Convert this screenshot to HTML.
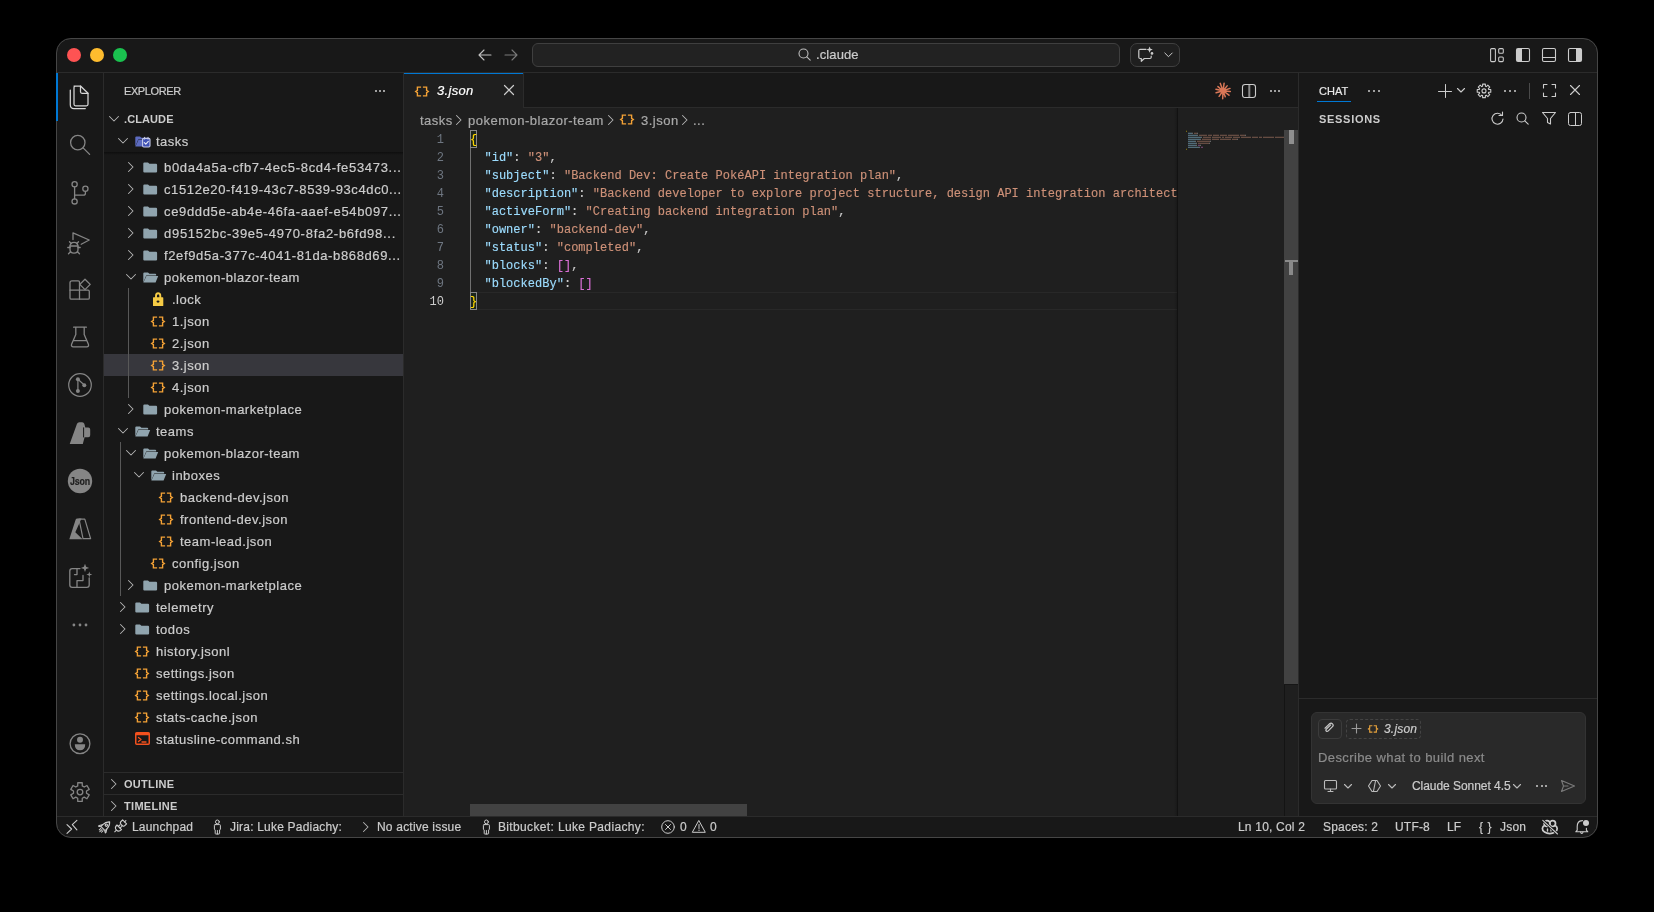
<!DOCTYPE html><html><head><meta charset="utf-8"><style>
*{box-sizing:border-box;margin:0;padding:0}
html,body{width:1654px;height:912px;background:#000;overflow:hidden;font-family:"Liberation Sans",sans-serif;color:#cccccc}
.a{position:absolute}
svg.i{position:absolute;overflow:visible;fill:none;stroke:#cccccc;stroke-width:1.1;stroke-linecap:round;stroke-linejoin:round}
.t{position:absolute;white-space:nowrap;font-size:13px;line-height:16px;-webkit-text-stroke:0.2px currentColor}
.code{position:absolute;font-family:"Liberation Mono",monospace;font-size:12px;line-height:18px;white-space:pre;color:#cccccc;letter-spacing:0.02px;-webkit-text-stroke:0.15px currentColor}
.k{color:#9cdcfe}.s{color:#ce9178}.b1{color:#ffd700}.b2{color:#da70d6}
.ln{position:absolute;font-family:"Liberation Mono",monospace;font-size:12px;line-height:18px;color:#6e7681;text-align:right;width:40px}
</style></head><body>
<div class="a" style="left:0;top:0;width:1654px;height:912px;clip-path:inset(38px 56px 74px 56px round 15px);will-change:transform">
<div class="a" style="left:56px;top:38px;width:1542px;height:800px;background:#181818"></div>
<div class="a" style="left:56px;top:72px;width:1542px;height:1px;background:#2b2b2b"></div>
<div class="a" style="left:67px;top:48px;width:14px;height:14px;border-radius:50%;background:#fe5353"></div>
<div class="a" style="left:90px;top:48px;width:14px;height:14px;border-radius:50%;background:#febc2e"></div>
<div class="a" style="left:113px;top:48px;width:14px;height:14px;border-radius:50%;background:#1ac24f"></div>
<svg class="i" style="left:478px;top:49px;stroke:#c0c0c0" width="14" height="12" viewBox="0 0 14 12"><path d="M1 6H13M6 1L1 6L6 11"/></svg>
<svg class="i" style="left:504px;top:49px;stroke:#7a7a7a" width="14" height="12" viewBox="0 0 14 12"><path d="M1 6H13M8 1L13 6L8 11"/></svg>
<div class="a" style="left:532px;top:43px;width:588px;height:24px;background:#222222;border:1px solid #3f3f3f;border-radius:6px"></div>
<svg class="i" style="left:798px;top:48px;stroke:#bdbdbd" width="13" height="13" viewBox="0 0 13 13"><circle cx="5.5" cy="5.5" r="4.5"/><path d="M8.8 8.8L12.2 12.2"/></svg>
<div class="t" style="left:816px;top:47.0px;font-size:13px;color:#cccccc;font-weight:normal;font-style:normal;line-height:16px;letter-spacing:0.1px;">.claude</div>
<div class="a" style="left:1130px;top:43px;width:50px;height:24px;background:#1f1f1f;border:1px solid #3f3f3f;border-radius:7px"></div>
<svg class="i" style="left:1138px;top:46px;stroke-width:1.2" width="17" height="17" viewBox="0 0 17 17"><path d="M8 3.3H2.3Q0.8 3.3 0.8 4.8V11.3Q0.8 12.5 2 12.5H3.3V15.3L6.3 12.5H12Q13.2 12.5 13.2 11.3V10.2"/><path d="M11.6 0.4L12.5 2.7L14.8 3.6L12.5 4.5L11.6 6.8L10.7 4.5L8.4 3.6L10.7 2.7Z" fill="#cccccc" stroke="none"/><circle cx="14" cy="7.4" r="1.3" fill="#cccccc" stroke="none"/></svg>
<svg class="i" style="left:1164px;top:52px;stroke-width:1" width="9" height="6" viewBox="0 0 9 6"><path d="M0.8 1L4.5 4.7L8.2 1"/></svg>
<svg class="i" style="left:1490px;top:48px;stroke-width:1.05" width="14" height="14" viewBox="0 0 14 14"><rect x="0.6" y="0.6" width="4.8" height="13" rx="1"/><rect x="8.7" y="0.6" width="4.6" height="4.7" rx="1"/><rect x="8.7" y="8.9" width="4.6" height="4.7" rx="1"/></svg>
<svg class="i" style="left:1516px;top:48px;" width="14" height="14" viewBox="0 0 14 14"><rect x="0.5" y="0.5" width="13" height="13" rx="1.5"/><rect x="1" y="1" width="5" height="12" fill="#cccccc" stroke="none"/></svg>
<svg class="i" style="left:1542px;top:48px;" width="14" height="14" viewBox="0 0 14 14"><rect x="0.5" y="0.5" width="13" height="13" rx="1.5"/><path d="M0.5 9.5H13.5"/></svg>
<svg class="i" style="left:1568px;top:48px;" width="14" height="14" viewBox="0 0 14 14"><rect x="0.5" y="0.5" width="13" height="13" rx="1.5"/><rect x="8" y="1" width="5" height="12" fill="#cccccc" stroke="none"/></svg>
<div class="a" style="left:103px;top:73px;width:1px;height:743px;background:#2b2b2b;"></div>
<svg class="i" style="left:57px;top:73px;stroke:none" width="46" height="743" viewBox="57 73 46 743"><g stroke="#d6d6d6" stroke-width="1.25"><path d="M74 86H80.5L88 93.3V104.3Q88 105.8 86.5 105.8H75.5Q74 105.8 74 104.3V87.5Q74 86 75.5 86Z"/><path d="M80.5 86V91.8Q80.5 93.3 82 93.3H88"/><path d="M70.3 90V104.8Q70.3 108.6 74 108.6H85.3"/></g><g stroke="#858585" stroke-width="1.3"><circle cx="77.8" cy="142.6" r="7.2"/><path d="M83.1 147.9L89.6 154.4"/></g><g stroke="#858585" stroke-width="1.3"><circle cx="74.6" cy="184.3" r="2.6"/><circle cx="85.4" cy="188.8" r="2.6"/><circle cx="74.6" cy="201.4" r="2.6"/><path d="M74.6 186.9V198.8M85.4 191.4V193.2Q85.4 195.2 83.4 195.2H74.6"/></g><g stroke="#858585" stroke-width="1.3"><path d="M73 239.5V232.8L89.2 240L81.2 244.3"/><path d="M70 246.5Q70 242.3 74 242.3Q78 242.3 78 246.5V249.5Q78 253.2 74 253.2Q70 253.2 70 249.5Z"/><path d="M71.2 243.5L69.5 241.8M76.8 243.5L78.5 241.8M70 247.5H67.8M78 247.5H80.2M70.6 251.8L68.5 253.8M77.4 251.8L79.5 253.8M70 246H78"/></g><g stroke="#858585" stroke-width="1.3"><path d="M72 280.8H78.2Q79.5 280.8 79.5 282.1V290.2H88Q89.3 290.2 89.3 291.5V297.9Q89.3 299.2 88 299.2H71.3Q70 299.2 70 297.9V282.8Q70 280.8 72 280.8Z"/><path d="M70 290.2H79.5V299.2"/><path d="M85 279.2L90.2 284.4L85 289.6L79.8 284.4Z" stroke-linejoin="round"/></g><g stroke="#858585" stroke-width="1.3"><path d="M73.6 327.2H86.4M75.8 327.2V334.6L71.6 344.2Q70.9 346.8 73.3 346.8H86.8Q89.1 346.8 88.4 344.2L84.2 334.6V327.2M73.4 340.7H86.6"/></g><g stroke="#858585" stroke-width="1.2"><circle cx="80" cy="385" r="11.3"/><path d="M77.9 379.3V391.1M77.9 379.3L84.3 385"/></g><g fill="#858585"><circle cx="77.9" cy="379.3" r="2"/><circle cx="84.3" cy="385.2" r="2"/><circle cx="77.9" cy="391.1" r="2"/></g><path fill="#858585" d="M69.7 444L77 423.8Q77.6 422.2 79.3 422.2H82.2Q83.8 422.2 84.3 423.8L85.3 427.6H88.3Q90.2 427.6 90.2 429.5V435.3Q90.2 437.2 88.3 437.2H84.6L82.8 444Z"/><path stroke="#181818" stroke-width="1" d="M83.6 427.8V437"/><circle fill="#858585" cx="80" cy="481" r="12.2"/><path fill="#858585" d="M69.3 539.2L75.7 519.6Q76.1 518.5 77.2 518.5H81.5L75.3 532.3L82.6 539.2Z"/><path stroke="#858585" stroke-width="1.2" stroke-linejoin="round" d="M79 519.1H84.8L90.6 538.6H83Z"/><g stroke="#858585" stroke-width="1.3"><path d="M80 568.6H72.2Q69.8 568.6 69.8 571V585Q69.8 587.4 72.2 587.4H86.8Q89.2 587.4 89.2 585V578"/><path d="M77 568.6V574.6H74.5M77 587.4V580.6H83V575.5"/></g><g fill="#858585"><path d="M85 563.8L86.1 566.8L89.1 567.9L86.1 569L85 572L83.9 569L80.9 567.9L83.9 566.8Z"/><path d="M89.3 571.5L90 573.8L92.3 574.5L90 575.2L89.3 577.5L88.6 575.2L86.3 574.5L88.6 573.8Z"/></g><g fill="#858585"><circle cx="73.9" cy="625" r="1.4"/><circle cx="80" cy="625" r="1.4"/><circle cx="86" cy="625" r="1.4"/></g><circle stroke="#858585" stroke-width="1.3" cx="80" cy="743.7" r="9.9"/><circle fill="#858585" cx="80" cy="739.7" r="3"/><path fill="#858585" d="M74.8 744.2H85.2Q85.2 750.2 80 750.2Q74.8 750.2 74.8 744.2Z"/><path stroke="#858585" stroke-width="1.3" stroke-linejoin="round" d="M77.72 785.91 L77.76 782.77 L82.24 782.77 L82.28 785.91 L84.22 787.03 L86.96 785.49 L89.20 789.37 L86.50 790.98 L86.50 793.22 L89.20 794.83 L86.96 798.71 L84.22 797.17 L82.28 798.29 L82.24 801.43 L77.76 801.43 L77.72 798.29 L75.78 797.17 L73.04 798.71 L70.80 794.83 L73.50 793.22 L73.50 790.98 L70.80 789.37 L73.04 785.49 L75.78 787.03Z"/><circle stroke="#858585" stroke-width="1.3" cx="80" cy="792.1" r="2.8"/></svg>
<div class="t" style="left:65px;top:473px;width:30px;text-align:center;font-size:11px;font-weight:bold;color:#1e1e1e;letter-spacing:-0.2px;transform:scaleX(0.8);transform-origin:center">Json</div>
<div class="t" style="left:124px;top:83.0px;font-size:11px;color:#cccccc;font-weight:normal;font-style:normal;line-height:16px;letter-spacing:-0.4px;">EXPLORER</div>
<div class="a" style="left:375px;top:90px;width:2.2px;height:2.2px;border-radius:50%;background:#cccccc"></div>
<div class="a" style="left:379px;top:90px;width:2.2px;height:2.2px;border-radius:50%;background:#cccccc"></div>
<div class="a" style="left:383px;top:90px;width:2.2px;height:2.2px;border-radius:50%;background:#cccccc"></div>
<svg class="i" style="left:109px;top:116px;stroke:#b4b4b4;stroke-width:1.05" width="10" height="6" viewBox="0 0 10 6"><path d="M0.5 0.5L5 5L9.5 0.5"/></svg>
<div class="t" style="left:124px;top:111.0px;font-size:11px;color:#cccccc;font-weight:bold;font-style:normal;line-height:16px;letter-spacing:0.1px;-webkit-text-stroke:0;">.CLAUDE</div>
<svg class="i" style="left:118px;top:138px;stroke:#b4b4b4;stroke-width:1.05" width="10" height="6" viewBox="0 0 10 6"><path d="M0.5 0.5L5 5L9.5 0.5"/></svg>
<svg class="i" style="left:135px;top:136px;" width="16" height="12" viewBox="0 0 16 12"><path d="M0.3 1.6Q0.3 0.5 1.4 0.5H5L6.4 1.8H12.2Q13.2 1.8 13.2 2.8V3.6H3.2L0.3 10.5Z" fill="#5c6bc0" stroke="none"/><path d="M3.4 4.1H15.2L12.6 10.6H0.4Z" fill="#5c6bc0" stroke="none"/><rect x="7.6" y="2.4" width="7.4" height="8.6" rx="1.2" fill="#3f51b5" stroke="#c5cae9" stroke-width="1.1"/><path d="M9.3 6.6L10.8 8.1L13.3 5.3" stroke="#e8eaf6" stroke-width="1.1"/><path d="M9.6 1.3V3.2M13 1.3V3.2" stroke="#c5cae9" stroke-width="1"/></svg>
<div class="t" style="left:156px;top:134.0px;font-size:13px;color:#cccccc;font-weight:normal;font-style:normal;line-height:16px;letter-spacing:0.5px;">tasks</div>
<div class="a" style="left:104px;top:152px;width:299px;height:3px;background:linear-gradient(#0e0e0e,rgba(24,24,24,0))"></div>
<div class="a" style="left:104px;top:354px;width:299px;height:22px;background:#37373d;"></div>
<div class="a" style="left:128px;top:288px;width:1px;height:110px;background:#585858;"></div>
<div class="a" style="left:120px;top:442px;width:1px;height:154px;background:#585858;"></div>
<svg class="i" style="left:128px;top:162px;stroke:#b4b4b4;stroke-width:1.05" width="6" height="10" viewBox="0 0 6 10"><path d="M0.5 0.5L5 5L0.5 9.5"/></svg>
<svg class="i" style="left:143px;top:161.5px;" width="15" height="11" viewBox="0 0 15 11"><path d="M0.3 1.6Q0.3 0.5 1.4 0.5H5L6.4 1.8H13Q14.1 1.8 14.1 2.9V9.4Q14.1 10.5 13 10.5H1.4Q0.3 10.5 0.3 9.4Z" fill="#90a4ae" stroke="none"/></svg>
<div class="t" style="left:164px;top:160.0px;font-size:13px;color:#cccccc;font-weight:normal;font-style:normal;line-height:16px;letter-spacing:0.693px;">b0da4a5a-cfb7-4ec5-8cd4-fe53473...</div>
<svg class="i" style="left:128px;top:184px;stroke:#b4b4b4;stroke-width:1.05" width="6" height="10" viewBox="0 0 6 10"><path d="M0.5 0.5L5 5L0.5 9.5"/></svg>
<svg class="i" style="left:143px;top:183.5px;" width="15" height="11" viewBox="0 0 15 11"><path d="M0.3 1.6Q0.3 0.5 1.4 0.5H5L6.4 1.8H13Q14.1 1.8 14.1 2.9V9.4Q14.1 10.5 13 10.5H1.4Q0.3 10.5 0.3 9.4Z" fill="#90a4ae" stroke="none"/></svg>
<div class="t" style="left:164px;top:182.0px;font-size:13px;color:#cccccc;font-weight:normal;font-style:normal;line-height:16px;letter-spacing:0.617px;">c1512e20-f419-43c7-8539-93c4dc0...</div>
<svg class="i" style="left:128px;top:206px;stroke:#b4b4b4;stroke-width:1.05" width="6" height="10" viewBox="0 0 6 10"><path d="M0.5 0.5L5 5L0.5 9.5"/></svg>
<svg class="i" style="left:143px;top:205.5px;" width="15" height="11" viewBox="0 0 15 11"><path d="M0.3 1.6Q0.3 0.5 1.4 0.5H5L6.4 1.8H13Q14.1 1.8 14.1 2.9V9.4Q14.1 10.5 13 10.5H1.4Q0.3 10.5 0.3 9.4Z" fill="#90a4ae" stroke="none"/></svg>
<div class="t" style="left:164px;top:204.0px;font-size:13px;color:#cccccc;font-weight:normal;font-style:normal;line-height:16px;letter-spacing:0.648px;">ce9ddd5e-ab4e-46fa-aaef-e54b097...</div>
<svg class="i" style="left:128px;top:228px;stroke:#b4b4b4;stroke-width:1.05" width="6" height="10" viewBox="0 0 6 10"><path d="M0.5 0.5L5 5L0.5 9.5"/></svg>
<svg class="i" style="left:143px;top:227.5px;" width="15" height="11" viewBox="0 0 15 11"><path d="M0.3 1.6Q0.3 0.5 1.4 0.5H5L6.4 1.8H13Q14.1 1.8 14.1 2.9V9.4Q14.1 10.5 13 10.5H1.4Q0.3 10.5 0.3 9.4Z" fill="#90a4ae" stroke="none"/></svg>
<div class="t" style="left:164px;top:226.0px;font-size:13px;color:#cccccc;font-weight:normal;font-style:normal;line-height:16px;letter-spacing:0.723px;">d95152bc-39e5-4970-8fa2-b6fd98...</div>
<svg class="i" style="left:128px;top:250px;stroke:#b4b4b4;stroke-width:1.05" width="6" height="10" viewBox="0 0 6 10"><path d="M0.5 0.5L5 5L0.5 9.5"/></svg>
<svg class="i" style="left:143px;top:249.5px;" width="15" height="11" viewBox="0 0 15 11"><path d="M0.3 1.6Q0.3 0.5 1.4 0.5H5L6.4 1.8H13Q14.1 1.8 14.1 2.9V9.4Q14.1 10.5 13 10.5H1.4Q0.3 10.5 0.3 9.4Z" fill="#90a4ae" stroke="none"/></svg>
<div class="t" style="left:164px;top:248.0px;font-size:13px;color:#cccccc;font-weight:normal;font-style:normal;line-height:16px;letter-spacing:0.63px;">f2ef9d5a-377c-4041-81da-b868d69...</div>
<svg class="i" style="left:126px;top:274px;stroke:#b4b4b4;stroke-width:1.05" width="10" height="6" viewBox="0 0 10 6"><path d="M0.5 0.5L5 5L9.5 0.5"/></svg>
<svg class="i" style="left:143px;top:271.5px;" width="15" height="11" viewBox="0 0 15 11"><path d="M0.3 1.6Q0.3 0.5 1.4 0.5H5L6.4 1.8H12.2Q13.2 1.8 13.2 2.8V3.6H3.2L0.3 10.5Z" fill="#90a4ae" stroke="none"/><path d="M3.4 4.1H15.2L12.6 10.6H0.4Z" fill="#90a4ae" stroke="none"/></svg>
<div class="t" style="left:164px;top:270.0px;font-size:13px;color:#cccccc;font-weight:normal;font-style:normal;line-height:16px;letter-spacing:0.5px;">pokemon-blazor-team</div>
<svg class="i" style="left:152.9px;top:291.5px;" width="11" height="15" viewBox="0 0 11 15"><path d="M3 6V3.9Q3 1.2 5.15 1.2Q7.3 1.2 7.3 3.9V6" stroke="#f5cb45" stroke-width="1.9"/><rect x="0" y="5.3" width="10.3" height="8.7" rx="0.6" fill="#f5cb45" stroke="none"/><ellipse cx="5" cy="9.6" rx="1.5" ry="1.1" fill="#181818" stroke="none"/></svg>
<div class="t" style="left:172px;top:292.0px;font-size:13px;color:#cccccc;font-weight:normal;font-style:normal;line-height:16px;letter-spacing:0.5px;">.lock</div>
<svg class="i" style="left:151px;top:315.5px;stroke:#f4a236;stroke-width:1.4;stroke-linecap:butt;stroke-linejoin:miter" width="14.0" height="11.0" viewBox="0 0 14 11"><path d="M6.1 1.1H2.4V4.3L0.7 5.5L2.4 6.7V9.9H6.1M7.9 1.1H11.6V4.3L13.3 5.5L11.6 6.7V9.9H7.9"/></svg>
<div class="t" style="left:172px;top:314.0px;font-size:13px;color:#cccccc;font-weight:normal;font-style:normal;line-height:16px;letter-spacing:0.5px;">1.json</div>
<svg class="i" style="left:151px;top:337.5px;stroke:#f4a236;stroke-width:1.4;stroke-linecap:butt;stroke-linejoin:miter" width="14.0" height="11.0" viewBox="0 0 14 11"><path d="M6.1 1.1H2.4V4.3L0.7 5.5L2.4 6.7V9.9H6.1M7.9 1.1H11.6V4.3L13.3 5.5L11.6 6.7V9.9H7.9"/></svg>
<div class="t" style="left:172px;top:336.0px;font-size:13px;color:#cccccc;font-weight:normal;font-style:normal;line-height:16px;letter-spacing:0.5px;">2.json</div>
<svg class="i" style="left:151px;top:359.5px;stroke:#f4a236;stroke-width:1.4;stroke-linecap:butt;stroke-linejoin:miter" width="14.0" height="11.0" viewBox="0 0 14 11"><path d="M6.1 1.1H2.4V4.3L0.7 5.5L2.4 6.7V9.9H6.1M7.9 1.1H11.6V4.3L13.3 5.5L11.6 6.7V9.9H7.9"/></svg>
<div class="t" style="left:172px;top:358.0px;font-size:13px;color:#cccccc;font-weight:normal;font-style:normal;line-height:16px;letter-spacing:0.5px;">3.json</div>
<svg class="i" style="left:151px;top:381.5px;stroke:#f4a236;stroke-width:1.4;stroke-linecap:butt;stroke-linejoin:miter" width="14.0" height="11.0" viewBox="0 0 14 11"><path d="M6.1 1.1H2.4V4.3L0.7 5.5L2.4 6.7V9.9H6.1M7.9 1.1H11.6V4.3L13.3 5.5L11.6 6.7V9.9H7.9"/></svg>
<div class="t" style="left:172px;top:380.0px;font-size:13px;color:#cccccc;font-weight:normal;font-style:normal;line-height:16px;letter-spacing:0.5px;">4.json</div>
<svg class="i" style="left:128px;top:404px;stroke:#b4b4b4;stroke-width:1.05" width="6" height="10" viewBox="0 0 6 10"><path d="M0.5 0.5L5 5L0.5 9.5"/></svg>
<svg class="i" style="left:143px;top:403.5px;" width="15" height="11" viewBox="0 0 15 11"><path d="M0.3 1.6Q0.3 0.5 1.4 0.5H5L6.4 1.8H13Q14.1 1.8 14.1 2.9V9.4Q14.1 10.5 13 10.5H1.4Q0.3 10.5 0.3 9.4Z" fill="#90a4ae" stroke="none"/></svg>
<div class="t" style="left:164px;top:402.0px;font-size:13px;color:#cccccc;font-weight:normal;font-style:normal;line-height:16px;letter-spacing:0.5px;">pokemon-marketplace</div>
<svg class="i" style="left:118px;top:428px;stroke:#b4b4b4;stroke-width:1.05" width="10" height="6" viewBox="0 0 10 6"><path d="M0.5 0.5L5 5L9.5 0.5"/></svg>
<svg class="i" style="left:135px;top:425.5px;" width="15" height="11" viewBox="0 0 15 11"><path d="M0.3 1.6Q0.3 0.5 1.4 0.5H5L6.4 1.8H12.2Q13.2 1.8 13.2 2.8V3.6H3.2L0.3 10.5Z" fill="#90a4ae" stroke="none"/><path d="M3.4 4.1H15.2L12.6 10.6H0.4Z" fill="#90a4ae" stroke="none"/></svg>
<div class="t" style="left:156px;top:424.0px;font-size:13px;color:#cccccc;font-weight:normal;font-style:normal;line-height:16px;letter-spacing:0.5px;">teams</div>
<svg class="i" style="left:126px;top:450px;stroke:#b4b4b4;stroke-width:1.05" width="10" height="6" viewBox="0 0 10 6"><path d="M0.5 0.5L5 5L9.5 0.5"/></svg>
<svg class="i" style="left:143px;top:447.5px;" width="15" height="11" viewBox="0 0 15 11"><path d="M0.3 1.6Q0.3 0.5 1.4 0.5H5L6.4 1.8H12.2Q13.2 1.8 13.2 2.8V3.6H3.2L0.3 10.5Z" fill="#90a4ae" stroke="none"/><path d="M3.4 4.1H15.2L12.6 10.6H0.4Z" fill="#90a4ae" stroke="none"/></svg>
<div class="t" style="left:164px;top:446.0px;font-size:13px;color:#cccccc;font-weight:normal;font-style:normal;line-height:16px;letter-spacing:0.5px;">pokemon-blazor-team</div>
<svg class="i" style="left:134px;top:472px;stroke:#b4b4b4;stroke-width:1.05" width="10" height="6" viewBox="0 0 10 6"><path d="M0.5 0.5L5 5L9.5 0.5"/></svg>
<svg class="i" style="left:151px;top:469.5px;" width="15" height="11" viewBox="0 0 15 11"><path d="M0.3 1.6Q0.3 0.5 1.4 0.5H5L6.4 1.8H12.2Q13.2 1.8 13.2 2.8V3.6H3.2L0.3 10.5Z" fill="#90a4ae" stroke="none"/><path d="M3.4 4.1H15.2L12.6 10.6H0.4Z" fill="#90a4ae" stroke="none"/></svg>
<div class="t" style="left:172px;top:468.0px;font-size:13px;color:#cccccc;font-weight:normal;font-style:normal;line-height:16px;letter-spacing:0.5px;">inboxes</div>
<svg class="i" style="left:159px;top:491.5px;stroke:#f4a236;stroke-width:1.4;stroke-linecap:butt;stroke-linejoin:miter" width="14.0" height="11.0" viewBox="0 0 14 11"><path d="M6.1 1.1H2.4V4.3L0.7 5.5L2.4 6.7V9.9H6.1M7.9 1.1H11.6V4.3L13.3 5.5L11.6 6.7V9.9H7.9"/></svg>
<div class="t" style="left:180px;top:490.0px;font-size:13px;color:#cccccc;font-weight:normal;font-style:normal;line-height:16px;letter-spacing:0.5px;">backend-dev.json</div>
<svg class="i" style="left:159px;top:513.5px;stroke:#f4a236;stroke-width:1.4;stroke-linecap:butt;stroke-linejoin:miter" width="14.0" height="11.0" viewBox="0 0 14 11"><path d="M6.1 1.1H2.4V4.3L0.7 5.5L2.4 6.7V9.9H6.1M7.9 1.1H11.6V4.3L13.3 5.5L11.6 6.7V9.9H7.9"/></svg>
<div class="t" style="left:180px;top:512.0px;font-size:13px;color:#cccccc;font-weight:normal;font-style:normal;line-height:16px;letter-spacing:0.5px;">frontend-dev.json</div>
<svg class="i" style="left:159px;top:535.5px;stroke:#f4a236;stroke-width:1.4;stroke-linecap:butt;stroke-linejoin:miter" width="14.0" height="11.0" viewBox="0 0 14 11"><path d="M6.1 1.1H2.4V4.3L0.7 5.5L2.4 6.7V9.9H6.1M7.9 1.1H11.6V4.3L13.3 5.5L11.6 6.7V9.9H7.9"/></svg>
<div class="t" style="left:180px;top:534.0px;font-size:13px;color:#cccccc;font-weight:normal;font-style:normal;line-height:16px;letter-spacing:0.5px;">team-lead.json</div>
<svg class="i" style="left:151px;top:557.5px;stroke:#f4a236;stroke-width:1.4;stroke-linecap:butt;stroke-linejoin:miter" width="14.0" height="11.0" viewBox="0 0 14 11"><path d="M6.1 1.1H2.4V4.3L0.7 5.5L2.4 6.7V9.9H6.1M7.9 1.1H11.6V4.3L13.3 5.5L11.6 6.7V9.9H7.9"/></svg>
<div class="t" style="left:172px;top:556.0px;font-size:13px;color:#cccccc;font-weight:normal;font-style:normal;line-height:16px;letter-spacing:0.5px;">config.json</div>
<svg class="i" style="left:128px;top:580px;stroke:#b4b4b4;stroke-width:1.05" width="6" height="10" viewBox="0 0 6 10"><path d="M0.5 0.5L5 5L0.5 9.5"/></svg>
<svg class="i" style="left:143px;top:579.5px;" width="15" height="11" viewBox="0 0 15 11"><path d="M0.3 1.6Q0.3 0.5 1.4 0.5H5L6.4 1.8H13Q14.1 1.8 14.1 2.9V9.4Q14.1 10.5 13 10.5H1.4Q0.3 10.5 0.3 9.4Z" fill="#90a4ae" stroke="none"/></svg>
<div class="t" style="left:164px;top:578.0px;font-size:13px;color:#cccccc;font-weight:normal;font-style:normal;line-height:16px;letter-spacing:0.5px;">pokemon-marketplace</div>
<svg class="i" style="left:120px;top:602px;stroke:#b4b4b4;stroke-width:1.05" width="6" height="10" viewBox="0 0 6 10"><path d="M0.5 0.5L5 5L0.5 9.5"/></svg>
<svg class="i" style="left:135px;top:601.5px;" width="15" height="11" viewBox="0 0 15 11"><path d="M0.3 1.6Q0.3 0.5 1.4 0.5H5L6.4 1.8H13Q14.1 1.8 14.1 2.9V9.4Q14.1 10.5 13 10.5H1.4Q0.3 10.5 0.3 9.4Z" fill="#90a4ae" stroke="none"/></svg>
<div class="t" style="left:156px;top:600.0px;font-size:13px;color:#cccccc;font-weight:normal;font-style:normal;line-height:16px;letter-spacing:0.5px;">telemetry</div>
<svg class="i" style="left:120px;top:624px;stroke:#b4b4b4;stroke-width:1.05" width="6" height="10" viewBox="0 0 6 10"><path d="M0.5 0.5L5 5L0.5 9.5"/></svg>
<svg class="i" style="left:135px;top:623.5px;" width="15" height="11" viewBox="0 0 15 11"><path d="M0.3 1.6Q0.3 0.5 1.4 0.5H5L6.4 1.8H13Q14.1 1.8 14.1 2.9V9.4Q14.1 10.5 13 10.5H1.4Q0.3 10.5 0.3 9.4Z" fill="#90a4ae" stroke="none"/></svg>
<div class="t" style="left:156px;top:622.0px;font-size:13px;color:#cccccc;font-weight:normal;font-style:normal;line-height:16px;letter-spacing:0.5px;">todos</div>
<svg class="i" style="left:135px;top:645.5px;stroke:#f4a236;stroke-width:1.4;stroke-linecap:butt;stroke-linejoin:miter" width="14.0" height="11.0" viewBox="0 0 14 11"><path d="M6.1 1.1H2.4V4.3L0.7 5.5L2.4 6.7V9.9H6.1M7.9 1.1H11.6V4.3L13.3 5.5L11.6 6.7V9.9H7.9"/></svg>
<div class="t" style="left:156px;top:644.0px;font-size:13px;color:#cccccc;font-weight:normal;font-style:normal;line-height:16px;letter-spacing:0.5px;">history.jsonl</div>
<svg class="i" style="left:135px;top:667.5px;stroke:#f4a236;stroke-width:1.4;stroke-linecap:butt;stroke-linejoin:miter" width="14.0" height="11.0" viewBox="0 0 14 11"><path d="M6.1 1.1H2.4V4.3L0.7 5.5L2.4 6.7V9.9H6.1M7.9 1.1H11.6V4.3L13.3 5.5L11.6 6.7V9.9H7.9"/></svg>
<div class="t" style="left:156px;top:666.0px;font-size:13px;color:#cccccc;font-weight:normal;font-style:normal;line-height:16px;letter-spacing:0.5px;">settings.json</div>
<svg class="i" style="left:135px;top:689.5px;stroke:#f4a236;stroke-width:1.4;stroke-linecap:butt;stroke-linejoin:miter" width="14.0" height="11.0" viewBox="0 0 14 11"><path d="M6.1 1.1H2.4V4.3L0.7 5.5L2.4 6.7V9.9H6.1M7.9 1.1H11.6V4.3L13.3 5.5L11.6 6.7V9.9H7.9"/></svg>
<div class="t" style="left:156px;top:688.0px;font-size:13px;color:#cccccc;font-weight:normal;font-style:normal;line-height:16px;letter-spacing:0.5px;">settings.local.json</div>
<svg class="i" style="left:135px;top:711.5px;stroke:#f4a236;stroke-width:1.4;stroke-linecap:butt;stroke-linejoin:miter" width="14.0" height="11.0" viewBox="0 0 14 11"><path d="M6.1 1.1H2.4V4.3L0.7 5.5L2.4 6.7V9.9H6.1M7.9 1.1H11.6V4.3L13.3 5.5L11.6 6.7V9.9H7.9"/></svg>
<div class="t" style="left:156px;top:710.0px;font-size:13px;color:#cccccc;font-weight:normal;font-style:normal;line-height:16px;letter-spacing:0.5px;">stats-cache.json</div>
<svg class="i" style="left:135px;top:732px;" width="15" height="13" viewBox="0 0 15 13"><rect x="0.75" y="0.75" width="13.5" height="11.5" rx="1" stroke="#f4511e" stroke-width="1.5"/><rect x="0.75" y="0.75" width="13.5" height="2.5" fill="#f4511e" stroke="none"/><path d="M3.5 5.5L6 7.5L3.5 9.5M7 10H11" stroke="#f4511e" stroke-width="1.3"/></svg>
<div class="t" style="left:156px;top:732.0px;font-size:13px;color:#cccccc;font-weight:normal;font-style:normal;line-height:16px;letter-spacing:0.5px;">statusline-command.sh</div>
<div class="a" style="left:104px;top:772px;width:299px;height:1px;background:#2b2b2b;"></div>
<div class="a" style="left:104px;top:794px;width:299px;height:1px;background:#2b2b2b;"></div>
<svg class="i" style="left:111px;top:779px;stroke:#b4b4b4;stroke-width:1.05" width="6" height="10" viewBox="0 0 6 10"><path d="M0.5 0.5L5 5L0.5 9.5"/></svg>
<div class="t" style="left:124px;top:776.0px;font-size:11px;color:#cccccc;font-weight:bold;font-style:normal;line-height:16px;letter-spacing:0.3px;-webkit-text-stroke:0;">OUTLINE</div>
<svg class="i" style="left:111px;top:801px;stroke:#b4b4b4;stroke-width:1.05" width="6" height="10" viewBox="0 0 6 10"><path d="M0.5 0.5L5 5L0.5 9.5"/></svg>
<div class="t" style="left:124px;top:798.0px;font-size:11px;color:#cccccc;font-weight:bold;font-style:normal;line-height:16px;letter-spacing:0.3px;-webkit-text-stroke:0;">TIMELINE</div>
<div class="a" style="left:403px;top:73px;width:1px;height:743px;background:#2b2b2b;"></div>
<div class="a" style="left:404px;top:108px;width:894px;height:708px;background:#1f1f1f;"></div>
<div class="a" style="left:523px;top:107px;width:775px;height:1px;background:#2b2b2b;"></div>
<div class="a" style="left:404px;top:73px;width:119px;height:35px;background:#1f1f1f;"></div>
<div class="a" style="left:404px;top:73px;width:119px;height:1px;background:#0078d4;"></div>
<div class="a" style="left:523px;top:73px;width:1px;height:34px;background:#2b2b2b;"></div>
<svg class="i" style="left:415px;top:85.5px;stroke:#f4a236;stroke-width:1.4;stroke-linecap:butt;stroke-linejoin:miter" width="14.0" height="11.0" viewBox="0 0 14 11"><path d="M6.1 1.1H2.4V4.3L0.7 5.5L2.4 6.7V9.9H6.1M7.9 1.1H11.6V4.3L13.3 5.5L11.6 6.7V9.9H7.9"/></svg>
<div class="t" style="left:437px;top:82.5px;font-size:13px;color:#ffffff;font-weight:normal;font-style:italic;line-height:16px;letter-spacing:0.3px;">3.json</div>
<svg class="i" style="left:504px;top:85px;stroke:#cccccc;stroke-width:1.2" width="10" height="10" viewBox="0 0 10 10"><path d="M0.5 0.5L9.5 9.5M9.5 0.5L0.5 9.5"/></svg>
<svg class="i" style="left:1213px;top:81px;stroke:none" width="20" height="20" viewBox="1213 81 20 20"><path stroke="#d97757" stroke-width="1.5" stroke-linecap="round" d="M1224.49 90.93L1230.31 91.42M1224.21 91.69L1228.99 95.22M1223.53 92.21L1225.25 96.82M1222.94 92.30L1222.70 98.69M1222.14 92.03L1219.12 96.32M1221.56 91.21L1216.09 92.79M1221.53 90.49L1215.95 89.30M1221.85 89.84L1217.93 86.60M1222.48 89.39L1220.23 83.35M1223.22 89.32L1224.11 83.17M1223.97 89.65L1227.13 85.88M1224.42 90.31L1230.02 88.40"/><circle cx="1223" cy="90.8" r="2.8" fill="#d97757"/></svg>
<svg class="i" style="left:1242px;top:84px;stroke-width:1.1" width="14" height="14" viewBox="0 0 14 14"><rect x="0.5" y="0.5" width="13" height="13" rx="2.5"/><rect x="6.3" y="1" width="2" height="12" fill="#8a8a8a" stroke="none"/></svg>
<div class="a" style="left:1270px;top:90px;width:2.2px;height:2.2px;border-radius:50%;background:#cccccc"></div>
<div class="a" style="left:1274px;top:90px;width:2.2px;height:2.2px;border-radius:50%;background:#cccccc"></div>
<div class="a" style="left:1278px;top:90px;width:2.2px;height:2.2px;border-radius:50%;background:#cccccc"></div>
<div class="t" style="left:420px;top:112.5px;font-size:13px;color:#a9a9a9;font-weight:normal;font-style:normal;line-height:16px;letter-spacing:0.5px;">tasks</div>
<svg class="i" style="left:456px;top:114.5px;stroke:#b4b4b4;stroke-width:1.05" width="6" height="10" viewBox="0 0 6 10"><path d="M0.5 0.5L5 5L0.5 9.5"/></svg>
<div class="t" style="left:468px;top:112.5px;font-size:13px;color:#a9a9a9;font-weight:normal;font-style:normal;line-height:16px;letter-spacing:0.5px;">pokemon-blazor-team</div>
<svg class="i" style="left:608px;top:114.5px;stroke:#b4b4b4;stroke-width:1.05" width="6" height="10" viewBox="0 0 6 10"><path d="M0.5 0.5L5 5L0.5 9.5"/></svg>
<svg class="i" style="left:620px;top:114.0px;stroke:#f4a236;stroke-width:1.4;stroke-linecap:butt;stroke-linejoin:miter" width="14.0" height="11.0" viewBox="0 0 14 11"><path d="M6.1 1.1H2.4V4.3L0.7 5.5L2.4 6.7V9.9H6.1M7.9 1.1H11.6V4.3L13.3 5.5L11.6 6.7V9.9H7.9"/></svg>
<div class="t" style="left:641px;top:112.5px;font-size:13px;color:#a9a9a9;font-weight:normal;font-style:normal;line-height:16px;letter-spacing:0.5px;">3.json</div>
<svg class="i" style="left:682px;top:114.5px;stroke:#b4b4b4;stroke-width:1.05" width="6" height="10" viewBox="0 0 6 10"><path d="M0.5 0.5L5 5L0.5 9.5"/></svg>
<div class="t" style="left:693px;top:112.5px;font-size:13px;color:#a9a9a9;font-weight:normal;font-style:normal;line-height:16px;letter-spacing:0.5px;">...</div>
<div class="a" style="left:470px;top:292px;width:707px;height:18px;background:transparent;border-top:1px solid #282828;border-bottom:1px solid #282828"></div>
<div class="a" style="left:470px;top:130px;width:7px;height:18px;background:rgba(0,100,0,0.1);border:1px solid #888888"></div>
<div class="a" style="left:470px;top:292px;width:7px;height:18px;background:rgba(0,100,0,0.1);border:1px solid #888888"></div>
<div class="a" style="left:470px;top:148px;width:1px;height:144px;background:#707070;"></div>
<div class="ln" style="left:404px;top:131px;width:40px;color:#6e7681">1</div>
<div class="ln" style="left:404px;top:149px;width:40px;color:#6e7681">2</div>
<div class="ln" style="left:404px;top:167px;width:40px;color:#6e7681">3</div>
<div class="ln" style="left:404px;top:185px;width:40px;color:#6e7681">4</div>
<div class="ln" style="left:404px;top:203px;width:40px;color:#6e7681">5</div>
<div class="ln" style="left:404px;top:221px;width:40px;color:#6e7681">6</div>
<div class="ln" style="left:404px;top:239px;width:40px;color:#6e7681">7</div>
<div class="ln" style="left:404px;top:257px;width:40px;color:#6e7681">8</div>
<div class="ln" style="left:404px;top:275px;width:40px;color:#6e7681">9</div>
<div class="ln" style="left:404px;top:293px;width:40px;color:#cccccc">10</div>
<div class="a" style="left:470px;top:131px;width:707px;height:200px;overflow:hidden">
<div class="code" style="left:0;top:0px"><span class="b1">{</span></div>
<div class="code" style="left:0;top:18px">  <span class="k">"id"</span>: <span class="s">"3"</span>,</div>
<div class="code" style="left:0;top:36px">  <span class="k">"subject"</span>: <span class="s">"Backend Dev: Create PokéAPI integration plan"</span>,</div>
<div class="code" style="left:0;top:54px">  <span class="k">"description"</span>: <span class="s">"Backend developer to explore project structure, design API integration architecture"</span>,</div>
<div class="code" style="left:0;top:72px">  <span class="k">"activeForm"</span>: <span class="s">"Creating backend integration plan"</span>,</div>
<div class="code" style="left:0;top:90px">  <span class="k">"owner"</span>: <span class="s">"backend-dev"</span>,</div>
<div class="code" style="left:0;top:108px">  <span class="k">"status"</span>: <span class="s">"completed"</span>,</div>
<div class="code" style="left:0;top:126px">  <span class="k">"blocks"</span>: <span class="b2">[]</span>,</div>
<div class="code" style="left:0;top:144px">  <span class="k">"blockedBy"</span>: <span class="b2">[]</span></div>
<div class="code" style="left:0;top:162px"><span class="b1">}</span></div>
</div>
<svg class="a" style="left:1178px;top:126px;opacity:0.4" width="106" height="30" viewBox="1178 126 106 30"><rect x="1186" y="130.7" width="1" height="1.3" fill="#ffd700"/><rect x="1188" y="132.7" width="4" height="1.3" fill="#9cdcfe"/><rect x="1192" y="132.7" width="1" height="1.3" fill="#cccccc"/><rect x="1194" y="132.7" width="3" height="1.3" fill="#ce9178"/><rect x="1197" y="132.7" width="1" height="1.3" fill="#cccccc"/><rect x="1188" y="134.7" width="9" height="1.3" fill="#9cdcfe"/><rect x="1197" y="134.7" width="1" height="1.3" fill="#cccccc"/><rect x="1199" y="134.7" width="8" height="1.3" fill="#ce9178"/><rect x="1208" y="134.7" width="4" height="1.3" fill="#ce9178"/><rect x="1213" y="134.7" width="6" height="1.3" fill="#ce9178"/><rect x="1220" y="134.7" width="7" height="1.3" fill="#ce9178"/><rect x="1228" y="134.7" width="11" height="1.3" fill="#ce9178"/><rect x="1240" y="134.7" width="5" height="1.3" fill="#ce9178"/><rect x="1245" y="134.7" width="1" height="1.3" fill="#cccccc"/><rect x="1188" y="136.7" width="13" height="1.3" fill="#9cdcfe"/><rect x="1201" y="136.7" width="1" height="1.3" fill="#cccccc"/><rect x="1203" y="136.7" width="8" height="1.3" fill="#ce9178"/><rect x="1212" y="136.7" width="9" height="1.3" fill="#ce9178"/><rect x="1222" y="136.7" width="2" height="1.3" fill="#ce9178"/><rect x="1225" y="136.7" width="7" height="1.3" fill="#ce9178"/><rect x="1233" y="136.7" width="7" height="1.3" fill="#ce9178"/><rect x="1241" y="136.7" width="10" height="1.3" fill="#ce9178"/><rect x="1252" y="136.7" width="6" height="1.3" fill="#ce9178"/><rect x="1259" y="136.7" width="3" height="1.3" fill="#ce9178"/><rect x="1263" y="136.7" width="11" height="1.3" fill="#ce9178"/><rect x="1275" y="136.7" width="9" height="1.3" fill="#ce9178"/><rect x="1188" y="138.7" width="12" height="1.3" fill="#9cdcfe"/><rect x="1200" y="138.7" width="1" height="1.3" fill="#cccccc"/><rect x="1202" y="138.7" width="9" height="1.3" fill="#ce9178"/><rect x="1212" y="138.7" width="7" height="1.3" fill="#ce9178"/><rect x="1220" y="138.7" width="11" height="1.3" fill="#ce9178"/><rect x="1232" y="138.7" width="5" height="1.3" fill="#ce9178"/><rect x="1237" y="138.7" width="1" height="1.3" fill="#cccccc"/><rect x="1188" y="140.7" width="7" height="1.3" fill="#9cdcfe"/><rect x="1195" y="140.7" width="1" height="1.3" fill="#cccccc"/><rect x="1197" y="140.7" width="13" height="1.3" fill="#ce9178"/><rect x="1210" y="140.7" width="1" height="1.3" fill="#cccccc"/><rect x="1188" y="142.7" width="8" height="1.3" fill="#9cdcfe"/><rect x="1196" y="142.7" width="1" height="1.3" fill="#cccccc"/><rect x="1198" y="142.7" width="11" height="1.3" fill="#ce9178"/><rect x="1209" y="142.7" width="1" height="1.3" fill="#cccccc"/><rect x="1188" y="144.7" width="8" height="1.3" fill="#9cdcfe"/><rect x="1196" y="144.7" width="1" height="1.3" fill="#cccccc"/><rect x="1198" y="144.7" width="2" height="1.3" fill="#da70d6"/><rect x="1200" y="144.7" width="1" height="1.3" fill="#cccccc"/><rect x="1188" y="146.7" width="11" height="1.3" fill="#9cdcfe"/><rect x="1199" y="146.7" width="1" height="1.3" fill="#cccccc"/><rect x="1201" y="146.7" width="2" height="1.3" fill="#da70d6"/><rect x="1186" y="148.7" width="1" height="1.3" fill="#ffd700"/></svg>
<div class="a" style="left:1174px;top:108px;width:3px;height:708px;background:linear-gradient(90deg,rgba(0,0,0,0),rgba(0,0,0,0.18));"></div>
<div class="a" style="left:1177px;top:108px;width:1px;height:708px;background:#121212;"></div>
<div class="a" style="left:1284px;top:130px;width:14px;height:554px;background:#424242;"></div>
<div class="a" style="left:1284px;top:684px;width:1px;height:132px;background:#141414;"></div>
<div class="a" style="left:1284px;top:684px;width:14px;height:1px;background:#161616;"></div>
<div class="a" style="left:1289px;top:130px;width:5px;height:14px;background:#8f8f8f;"></div>
<div class="a" style="left:1285px;top:260px;width:14px;height:2px;background:#8a8a8a;"></div>
<div class="a" style="left:1289px;top:262px;width:4px;height:13px;background:#8a8a8a;"></div>
<div class="a" style="left:470px;top:804px;width:277px;height:12px;background:#424242;"></div>
<div class="a" style="left:1298px;top:73px;width:1px;height:743px;background:#2b2b2b;"></div>
<div class="t" style="left:1319px;top:83.0px;font-size:11px;color:#e7e7e7;font-weight:normal;font-style:normal;line-height:16px;letter-spacing:0px;">CHAT</div>
<div class="a" style="left:1317px;top:101px;width:34px;height:1px;background:#0078d4;"></div>
<div class="a" style="left:1368px;top:90px;width:2.2px;height:2.2px;border-radius:50%;background:#cccccc"></div>
<div class="a" style="left:1373px;top:90px;width:2.2px;height:2.2px;border-radius:50%;background:#cccccc"></div>
<div class="a" style="left:1378px;top:90px;width:2.2px;height:2.2px;border-radius:50%;background:#cccccc"></div>
<svg class="i" style="left:1438px;top:84px;stroke-width:1" width="14" height="14" viewBox="0 0 14 14"><path d="M7.5 0.5V13.5M0.5 7.5H13.5"/></svg>
<svg class="i" style="left:1457px;top:88px;" width="8" height="5" viewBox="0 0 8 5"><path d="M0.5 0.5L4 4L7.5 0.5"/></svg>
<svg class="i" style="left:1476px;top:83px;stroke-width:1.1" width="16" height="16" viewBox="0 0 16 16"><path d="M6.58 3.21 L6.65 1.13 L9.35 1.13 L9.42 3.21 L10.31 3.58 L11.83 2.16 L13.74 4.07 L12.32 5.59 L12.69 6.48 L14.77 6.55 L14.77 9.25 L12.69 9.32 L12.32 10.21 L13.74 11.73 L11.83 13.64 L10.31 12.22 L9.42 12.59 L9.35 14.67 L6.65 14.67 L6.58 12.59 L5.69 12.22 L4.17 13.64 L2.26 11.73 L3.68 10.21 L3.31 9.32 L1.23 9.25 L1.23 6.55 L3.31 6.48 L3.68 5.59 L2.26 4.07 L4.17 2.16 L5.69 3.58Z"/><circle cx="8" cy="7.9" r="2"/></svg>
<div class="a" style="left:1504px;top:90px;width:2.2px;height:2.2px;border-radius:50%;background:#cccccc"></div>
<div class="a" style="left:1509px;top:90px;width:2.2px;height:2.2px;border-radius:50%;background:#cccccc"></div>
<div class="a" style="left:1514px;top:90px;width:2.2px;height:2.2px;border-radius:50%;background:#cccccc"></div>
<div class="a" style="left:1529px;top:83px;width:1px;height:16px;background:#4a4a4a;"></div>
<svg class="i" style="left:1543px;top:84px;" width="13" height="13" viewBox="0 0 13 13"><path d="M0.5 4V0.5H4M9 0.5H12.5V4M12.5 9V12.5H9M4 12.5H0.5V9"/></svg>
<svg class="i" style="left:1570px;top:85px;" width="10" height="10" viewBox="0 0 10 10"><path d="M0.5 0.5L9.5 9.5M9.5 0.5L0.5 9.5"/></svg>
<div class="t" style="left:1319px;top:111.0px;font-size:11px;color:#cccccc;font-weight:bold;font-style:normal;line-height:16px;letter-spacing:0.7px;-webkit-text-stroke:0;">SESSIONS</div>
<svg class="i" style="left:1491px;top:112px;" width="13" height="13" viewBox="0 0 13 13"><path d="M11 3.5A5.5 5.5 0 1 0 12 7"/><path d="M8 3.5H11.5V0"/></svg>
<svg class="i" style="left:1516px;top:112px;" width="13" height="13" viewBox="0 0 13 13"><circle cx="5.5" cy="5.5" r="4.5"/><path d="M8.8 8.8L12.2 12.2"/></svg>
<svg class="i" style="left:1542px;top:112px;" width="14" height="13" viewBox="0 0 14 13"><path d="M0.5 0.5H13.5L8.5 6.5V12L5.5 10.5V6.5Z"/></svg>
<svg class="i" style="left:1568px;top:112px;stroke-width:1" width="14" height="14" viewBox="0 0 14 14"><rect x="0.5" y="0.5" width="13" height="13" rx="2"/><path d="M7.5 0.5V13.5"/></svg>
<div class="a" style="left:1299px;top:698px;width:298px;height:1px;background:#2b2b2b;"></div>
<div class="a" style="left:1311px;top:712px;width:275px;height:92px;background:#292929;border:1px solid #333333;border-radius:6px"></div>
<div class="a" style="left:1318px;top:719px;width:24px;height:20px;background:transparent;border:1px solid #3c3c3c;border-radius:4px"></div>
<svg class="i" style="left:1324px;top:722px;stroke:#c8c8c8;stroke-width:1.2" width="12" height="12" viewBox="0 0 12 12"><path d="M1 6.2L5.6 1.8Q7.1 0.4 8.5 1.8Q9.9 3.2 8.5 4.6L4.3 8.8Q3.2 9.9 2.3 9Q1.4 8.1 2.5 7L6.7 2.8"/></svg>
<div class="a" style="left:1346px;top:719px;width:75px;height:20px;background:transparent;border:1px dashed #444444;border-radius:4px"></div>
<svg class="i" style="left:1352px;top:724px;stroke:#9a9a9a" width="9" height="9" viewBox="0 0 9 9"><path d="M4.5 0V9M0 4.5H9"/></svg>
<svg class="i" style="left:1367.5px;top:725.4399999999999px;stroke:#e8a33d;stroke-width:1.6;stroke-linecap:butt;stroke-linejoin:miter" width="10.08" height="7.92" viewBox="0 0 14 11"><path d="M6.1 1.1H2.4V4.3L0.7 5.5L2.4 6.7V9.9H6.1M7.9 1.1H11.6V4.3L13.3 5.5L11.6 6.7V9.9H7.9"/></svg>
<div class="t" style="left:1384px;top:721.0px;font-size:12px;color:#cccccc;font-weight:normal;font-style:italic;line-height:16px;letter-spacing:0.2px;">3.json</div>
<div class="t" style="left:1318px;top:750.0px;font-size:13px;color:#8b8b8b;font-weight:normal;font-style:normal;line-height:16px;letter-spacing:0.4px;">Describe what to build next</div>
<svg class="i" style="left:1324px;top:780px;stroke:#bbbbbb" width="13" height="12" viewBox="0 0 13 12"><rect x="0.5" y="0.5" width="12" height="8.5" rx="1"/><path d="M4 11.5H9M6.5 9V11.5"/></svg>
<svg class="i" style="left:1344px;top:784px;stroke:#bbbbbb" width="8" height="5" viewBox="0 0 8 5"><path d="M0.5 0.5L4 4L7.5 0.5"/></svg>
<svg class="i" style="left:1368px;top:780px;stroke:#bbbbbb" width="13" height="12" viewBox="0 0 13 12"><path d="M4 0.5H9L12.5 6L9 11.5H4L0.5 6Z"/><path d="M7.5 1L5.5 11"/></svg>
<svg class="i" style="left:1388px;top:784px;stroke:#bbbbbb" width="8" height="5" viewBox="0 0 8 5"><path d="M0.5 0.5L4 4L7.5 0.5"/></svg>
<div class="t" style="left:1412px;top:778.0px;font-size:12px;color:#cccccc;font-weight:normal;font-style:normal;line-height:16px;letter-spacing:-0.05px;">Claude Sonnet 4.5</div>
<svg class="i" style="left:1513px;top:784px;stroke:#bbbbbb" width="8" height="5" viewBox="0 0 8 5"><path d="M0.5 0.5L4 4L7.5 0.5"/></svg>
<div class="a" style="left:1536px;top:785px;width:2.2px;height:2.2px;border-radius:50%;background:#cccccc"></div>
<div class="a" style="left:1540.5px;top:785px;width:2.2px;height:2.2px;border-radius:50%;background:#cccccc"></div>
<div class="a" style="left:1545px;top:785px;width:2.2px;height:2.2px;border-radius:50%;background:#cccccc"></div>
<svg class="i" style="left:1561px;top:780px;stroke:#7a7a7a" width="14" height="12" viewBox="0 0 14 12"><path d="M0.5 0.5L13.5 6L0.5 11.5L2.5 6Z M2.5 6H7"/></svg>
<div class="a" style="left:56px;top:816px;width:1542px;height:1px;background:#2b2b2b;"></div>
<svg class="i" style="left:60px;top:816px;stroke:#cccccc;stroke-width:1.1" width="70" height="22" viewBox="60 816 70 22"><path d="M67 824.7L71.6 829L67 833.4M76.9 820.4L72.3 824.7L76.9 829.8"/><g transform="translate(105.2 826.3) rotate(45)"><path d="M0 -6.3Q3 -3.6 3 0.5V3.2H-3V0.5Q-3 -3.6 0 -6.3Z"/><circle cx="0" cy="-1.6" r="1.1"/><path d="M-3 0.8L-4.8 3.6V4.6L-3 3.6M3 0.8L4.8 3.6V4.6L3 3.6"/><path d="M-1.6 4.6V6.8M0 4.6V7.6M1.6 4.6V6.8" stroke-width="1"/></g><g transform="translate(119.8 826.7) rotate(45)"><path d="M-2.8 -6.8H2.8V-4.2Q2.8 -2.4 0 -2.4Q-2.8 -2.4 -2.8 -4.2Z"/><path d="M0 -6.8V-8.6"/><path d="M-3.2 0.8Q-3.2 4.8 0 4.8Q3.2 4.8 3.2 0.8H-3.2Z"/><path d="M-1.2 0.8V-1.2M1.2 0.8V-1.2M0 4.8V7.2"/></g></svg>
<div class="t" style="left:132px;top:819.0px;font-size:12px;color:#cccccc;font-weight:normal;font-style:normal;line-height:16px;letter-spacing:0.2px;">Launchpad</div>
<svg class="i" style="left:212px;top:819px;stroke:#cccccc;stroke-width:1" width="10" height="16" viewBox="0 0 10 16"><circle cx="5.4" cy="2.9" r="1.9"/><path d="M3.2 5.6H7.6Q8.4 5.6 8.4 6.4V10.2L7.6 11V14.4Q7.6 15 7 15H3.8Q3.2 15 3.2 14.4V11L2.4 10.2V6.4Q2.4 5.6 3.2 5.6Z M5.4 11.5V15"/></svg>
<div class="t" style="left:230px;top:819.0px;font-size:12px;color:#cccccc;font-weight:normal;font-style:normal;line-height:16px;letter-spacing:0.2px;">Jira: Luke Padiachy:</div>
<svg class="i" style="left:363px;top:822px;stroke:#b4b4b4;stroke-width:1.05" width="6" height="10" viewBox="0 0 6 10"><path d="M0.5 0.5L5 5L0.5 9.5"/></svg>
<div class="t" style="left:377px;top:819.0px;font-size:12px;color:#cccccc;font-weight:normal;font-style:normal;line-height:16px;letter-spacing:0.2px;">No active issue</div>
<svg class="i" style="left:481px;top:819px;stroke:#cccccc;stroke-width:1" width="10" height="16" viewBox="0 0 10 16"><circle cx="5.4" cy="2.9" r="1.9"/><path d="M3.2 5.6H7.6Q8.4 5.6 8.4 6.4V10.2L7.6 11V14.4Q7.6 15 7 15H3.8Q3.2 15 3.2 14.4V11L2.4 10.2V6.4Q2.4 5.6 3.2 5.6Z M5.4 11.5V15"/></svg>
<div class="t" style="left:498px;top:819.0px;font-size:12px;color:#cccccc;font-weight:normal;font-style:normal;line-height:16px;letter-spacing:0.35px;">Bitbucket: Luke Padiachy:</div>
<svg class="i" style="left:661px;top:820px;stroke:#cccccc;stroke-width:1" width="14" height="14" viewBox="0 0 14 14"><circle cx="7" cy="7" r="6.3"/><path d="M4.5 4.5L9.5 9.5M9.5 4.5L4.5 9.5"/></svg>
<div class="t" style="left:680px;top:819.0px;font-size:12px;color:#cccccc;font-weight:normal;font-style:normal;line-height:16px;letter-spacing:0.2px;">0</div>
<svg class="i" style="left:691.5px;top:820px;stroke:#cccccc;stroke-width:1" width="14" height="13" viewBox="0 0 14 13"><path d="M7 0.8L13.3 12.3H0.7Z M7 4.5V8.5M7 10V10.6"/></svg>
<div class="t" style="left:710px;top:819.0px;font-size:12px;color:#cccccc;font-weight:normal;font-style:normal;line-height:16px;letter-spacing:0.2px;">0</div>
<div class="t" style="left:1238px;top:819.0px;font-size:12px;color:#cccccc;font-weight:normal;font-style:normal;line-height:16px;letter-spacing:0.2px;">Ln 10, Col 2</div>
<div class="t" style="left:1323px;top:819.0px;font-size:12px;color:#cccccc;font-weight:normal;font-style:normal;line-height:16px;letter-spacing:0.2px;">Spaces: 2</div>
<div class="t" style="left:1395px;top:819.0px;font-size:12px;color:#cccccc;font-weight:normal;font-style:normal;line-height:16px;letter-spacing:0.2px;">UTF-8</div>
<div class="t" style="left:1447px;top:819.0px;font-size:12px;color:#cccccc;font-weight:normal;font-style:normal;line-height:16px;letter-spacing:0.2px;">LF</div>
<div class="t" style="left:1479px;top:819.0px;font-size:12px;color:#cccccc;font-weight:normal;font-style:normal;line-height:16px;letter-spacing:0.6px;">{ }</div>
<div class="t" style="left:1500px;top:819.0px;font-size:12px;color:#cccccc;font-weight:normal;font-style:normal;line-height:16px;letter-spacing:0.2px;">Json</div>
<svg class="i" style="left:1541px;top:819px;stroke:#cccccc" width="18" height="16" viewBox="0 0 18 16"><circle cx="6" cy="4.6" r="2.9" stroke-width="1.7"/><circle cx="11.6" cy="4.6" r="2.9" stroke-width="1.7"/><path d="M3.2 6.8Q1.8 7.2 1.4 9.5Q1.3 11.8 3.5 13Q6 14.6 8.8 14.6Q11.6 14.6 14.1 13Q16.3 11.8 16.2 9.5Q15.8 7.2 14.4 6.8" stroke-width="1.7"/><path d="M6.5 10V12M10 10V12" stroke-width="1.4"/><path d="M1.8 1.3L16.5 15" stroke="#181818" stroke-width="2.6"/><path d="M1.8 1.3L16.5 15" stroke-width="1.1"/></svg>
<svg class="i" style="left:1575px;top:819px;stroke:#cccccc;stroke-width:1.1" width="15" height="16" viewBox="0 0 15 16"><path d="M7.5 1.6Q2.2 1.8 2.2 7.5V11.2L0.8 12.8H12.8L11.4 11.2V9.4"/><path d="M5.6 13Q5.8 14.4 6.8 14.4Q7.8 14.4 8 13"/><circle cx="11" cy="3.9" r="3" fill="#cccccc" stroke="none"/></svg>
</div>
<div class="a" style="left:56px;top:38px;width:1542px;height:800px;border:1px solid #464646;border-radius:15px;pointer-events:none"></div>
<div class="a" style="left:56px;top:73px;width:2.3px;height:48px;background:#0078d4;"></div>
</body></html>
